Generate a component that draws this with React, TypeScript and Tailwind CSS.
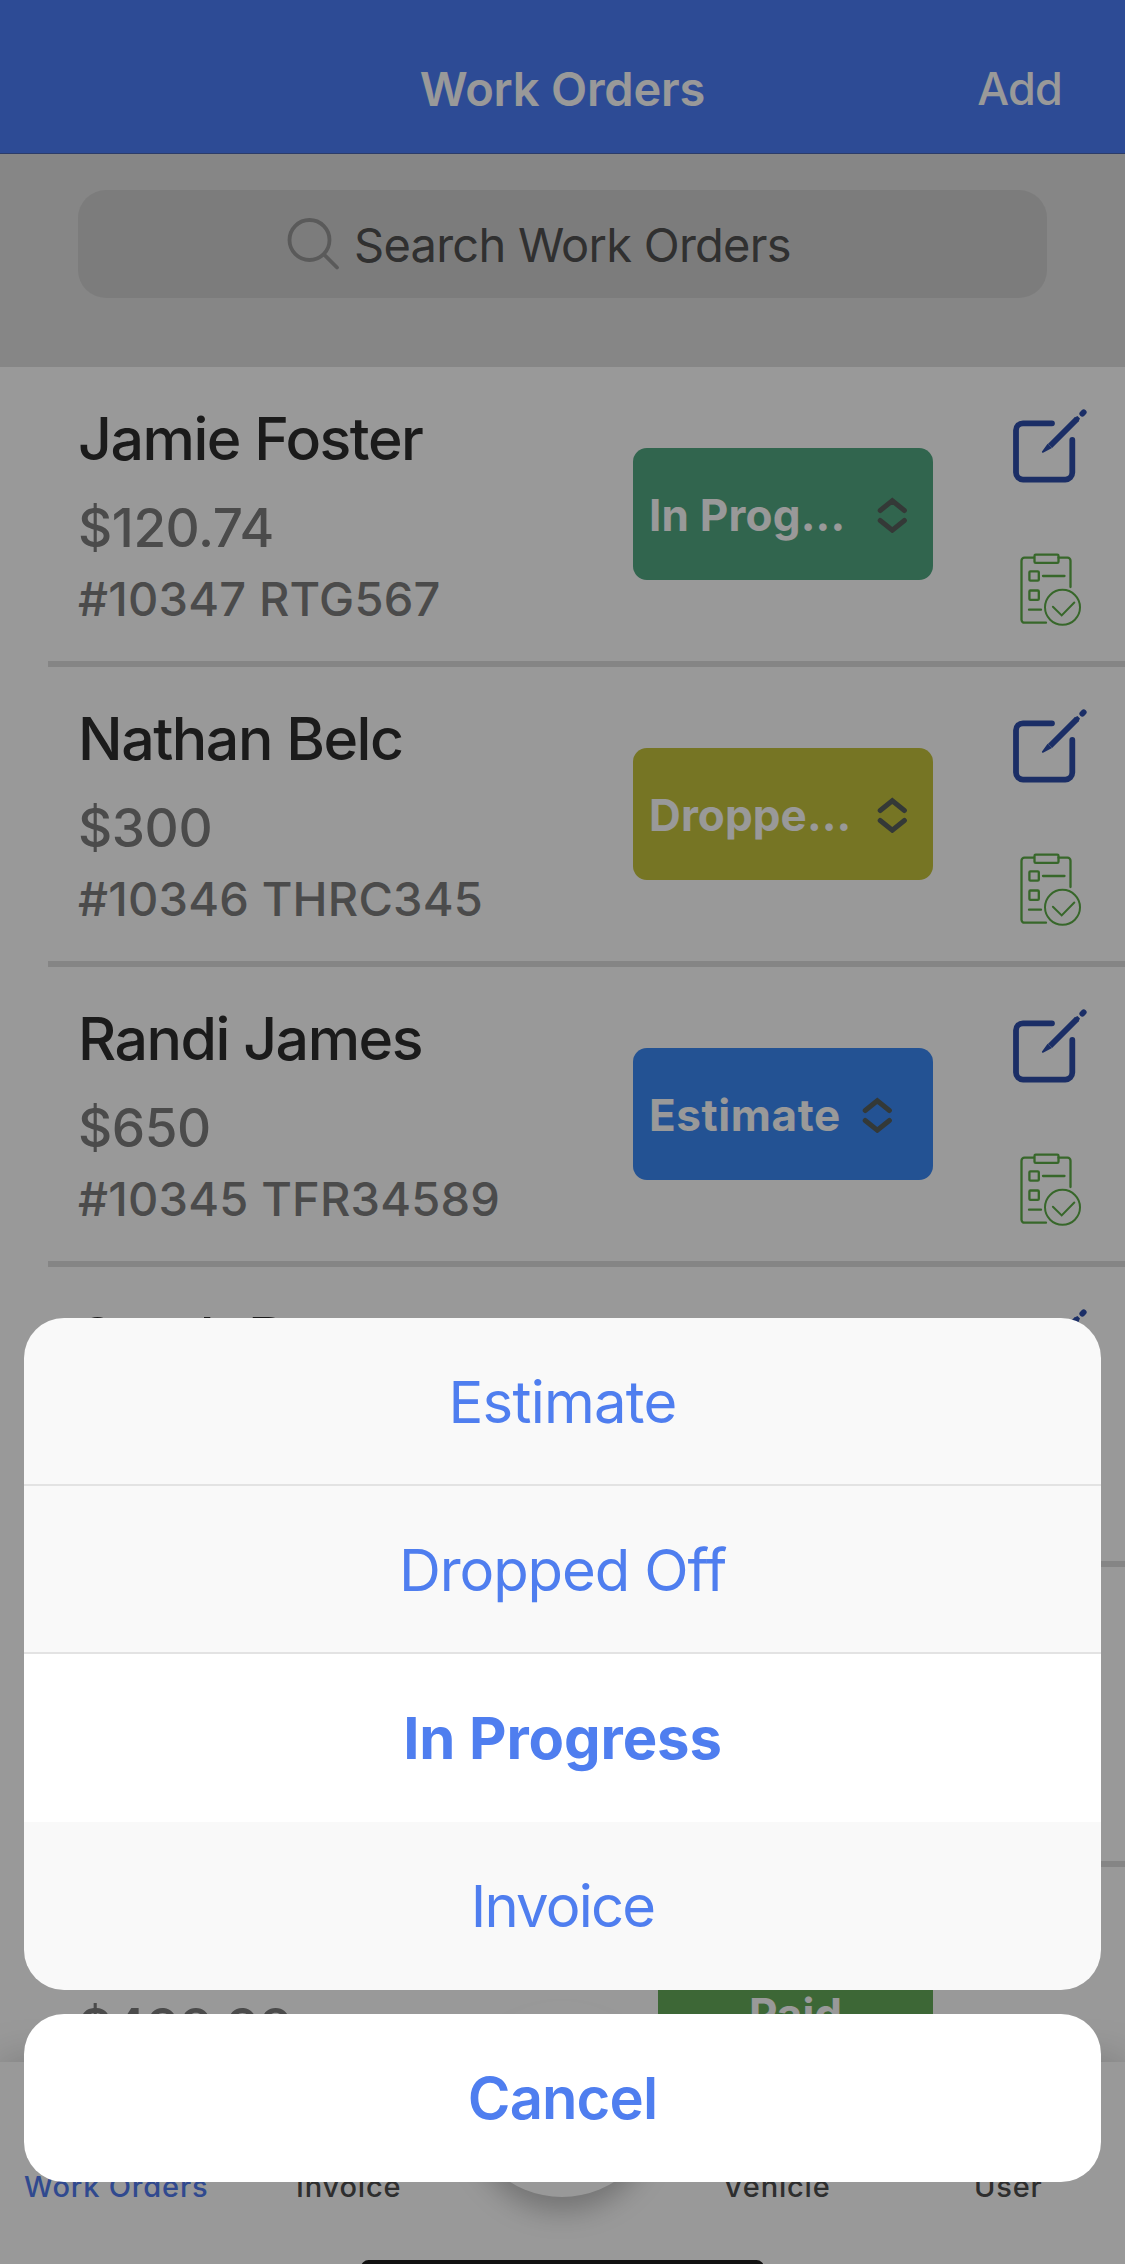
type Order = {
  name?: string;
  amount?: string;
  detail?: string;
  status?: "progress" | "dropped" | "estimate" | "paid";
};

const orders: Order[] = [
  { name: "Jamie Foster", amount: "$120.74", detail: "#10347 RTG567", status: "progress" },
  { name: "Nathan Belc", amount: "$300", detail: "#10346 THRC345", status: "dropped" },
  { name: "Randi James", amount: "$650", detail: "#10345 TFR34589", status: "estimate" },
  { name: "Sarah B" },
  {},
  { amount: "$498.98", status: "paid" },
];

const statuses = {
  progress: { label: "In Prog...", color: "bg-[#52a882]", text: "w-[227px] tracking-[0.2px]" },
  dropped: { label: "Droppe...", color: "bg-[#c5c33c]", text: "w-[227px] tracking-[0.1px]" },
  estimate: { label: "Estimate", color: "bg-[#3b89f5]", text: "w-[212px] tracking-[0.6px]" },
};

function EditIcon() {
  return (
    <svg width="80" height="80" viewBox="0 0 80 80" fill="none" stroke="#2d4eaa" strokeWidth="5.8" strokeLinecap="round">
      <path d="M45 16.3H16a7 7 0 0 0-7 7v42.3a7 7 0 0 0 7 7h42.3a7 7 0 0 0 7-7V33" />
      <path d="M70 12 43 39" strokeLinecap="butt" strokeWidth="6" />
      <path d="M67.5 10.5 70.5 9 73 11.5 71.5 14.5Z" fill="#2d4eaa" stroke="none" />
      <path d="M40.6 36.8 35 44.6a.8.8 0 0 0 1.1 1.1L45 41Z" fill="#2d4eaa" stroke="none" />
      <path d="M75.3 6.7 76.7 5.3" />
    </svg>
  );
}

function ChecklistIcon() {
  return (
    <svg width="68" height="78" viewBox="0 0 68 78" fill="none" stroke="#5dac46" strokeWidth="2.3" strokeLinecap="round">
      <path d="M18.5 7.7H9.5a3 3 0 0 0-3 3v59a3 3 0 0 0 3 3H31M43.5 7.7h9a3 3 0 0 1 3 3V37" />
      <rect x="19.5" y="4.7" width="24" height="8.2" rx="1.2" />
      <rect x="14.4" y="21.3" width="9.4" height="9.4" rx="1" />
      <rect x="14.4" y="40.5" width="9.4" height="9.4" rx="1" />
      <path d="M28 26h21.5M14 59.7h12" />
      <circle cx="47.5" cy="57.3" r="17.5" strokeWidth="2" />
      <path d="m37.9 56.7 8.8 8.7L59.3 52.5" strokeWidth="2" />
    </svg>
  );
}

function Chevrons() {
  return (
    <svg width="32" height="38" viewBox="0 0 32 38" fill="none" stroke="#585f5c" strokeWidth="5" strokeLinecap="round" strokeLinejoin="miter">
      <path d="M4.2 15.5 16.3 5.8l12.1 9.7M4.2 25.5 16.3 35.2l12.1-9.7" />
    </svg>
  );
}

function StatusButton({ status }: { status: Order["status"] }) {
  if (!status) return null;
  if (status === "paid") {
    return (
      <div className="mt-[81px] flex h-[132px] w-[275px] items-center justify-center bg-[#66ac5a] text-[44px] font-bold text-white">
        Paid
      </div>
    );
  }
  const s = statuses[status];
  return (
    <div className={`mt-[81px] flex h-[132px] w-[300px] items-center rounded-[14px] pl-[16px] ${s.color}`}>
      <span className={`whitespace-nowrap pt-[2px] text-[44px] font-bold text-white ${s.text}`}>{s.label}</span>
      <Chevrons />
    </div>
  );
}

function OrderRow({ order }: { order: Order }) {
  return (
    <div className="flex h-[300px] shrink-0 flex-col">
      <div className="flex h-[294px] items-start pl-[78px] pr-[32px]">
        <div className="flex flex-1 flex-col whitespace-nowrap pt-[32px] text-[#7d7d7d]">
          <div className="h-[80px] text-[59px] font-medium leading-[80px] tracking-[-0.025em] text-[#2e2e2e]">{order.name}</div>
          <div className="mt-[14px] h-[70px] text-[53px] font-medium leading-[70px] tracking-[-0.008em]">{order.amount}</div>
          <div className="h-[72px] text-[47px] font-medium leading-[72px] tracking-[0.2px]">{order.detail}</div>
        </div>
        <StatusButton status={order.status} />
        <div className="ml-[74px] flex w-[86px] flex-col pt-[40px]">
          {order.status !== "paid" && (
            <>
              <EditIcon />
              <div className="ml-[8px] mt-[63px]">
                <ChecklistIcon />
              </div>
            </>
          )}
        </div>
      </div>
      <div className="ml-[48px] h-[6px] bg-[#dedede]" />
    </div>
  );
}

export default function App() {
  return (
    <div className="relative flex h-[2264px] w-[1125px] flex-col overflow-hidden bg-white font-['Inter',sans-serif]">
      <header className="grid h-[154px] shrink-0 grid-cols-[1fr_auto_1fr] items-end border-b border-[#4a65ad] bg-[#4b7df8] text-white">
        <span />
        <h1 className="mb-[34px] text-[47px] font-semibold leading-[60px] tracking-[-0.2px]">Work Orders</h1>
        <span className="mb-[34px] mr-[63px] text-right text-[45px] font-medium leading-[60px] tracking-[-0.8px]">Add</span>
      </header>

      <div className="h-[213px] shrink-0 bg-[#dfdfdf] px-[78px] pt-[36px]">
        <div className="flex h-[108px] items-center rounded-[28px] bg-[#cfcfcf] pl-[207px]">
          <svg width="56" height="56" viewBox="0 0 56 56" fill="none" stroke="#969696" strokeWidth="3.8" strokeLinecap="round">
            <circle cx="24.5" cy="24" r="20" />
            <path d="M39 38.5 52 51.5" />
          </svg>
          <span className="ml-[13px] whitespace-nowrap pt-[2px] text-[47px] tracking-[-0.75px] text-[#505050]">Search Work Orders</span>
        </div>
      </div>

      <main className="flex min-h-0 flex-1 flex-col overflow-hidden">
        {orders.map((order, i) => (
          <OrderRow key={i} order={order} />
        ))}
      </main>

      {/* tab bar */}
      <nav className="relative h-[202px] shrink-0 bg-white pt-[107px] shadow-[0_0_40px_rgba(0,0,0,0.22)]">
        <div className="absolute left-[464px] top-[-61px] h-[196px] w-[196px] rounded-full bg-white shadow-[0_20px_28px_-6px_rgba(0,0,0,0.25)]" />
        <div className="flex whitespace-nowrap text-[29px] font-medium leading-[36px] tracking-[0.028em] text-[#4d4d4d]">
          <span className="ml-[24px] w-[272px] text-[#507aee]">Work Orders</span>
          <span className="w-[427px]">Invoice</span>
          <span className="w-[251px]">Vehicle</span>
          <span>User</span>
        </div>
      </nav>

      {/* action sheet */}
      <div className="absolute inset-0 flex flex-col justify-end bg-black/40 px-[24px] pb-[82px] text-center text-[58px] leading-[168px] text-[#4f7eef]">
        <div className="overflow-hidden rounded-[40px] bg-[#f9f9f9]">
          <div className="h-[168px] border-b-2 border-[#e3e3e3] tracking-[-0.75px]">Estimate</div>
          <div className="h-[168px] border-b-2 border-[#e3e3e3] tracking-[-1.1px]">Dropped Off</div>
          <div className="h-[168px] bg-white font-bold tracking-[-0.1px]">In Progress</div>
          <div className="h-[168px] tracking-[-1.8px]">Invoice</div>
        </div>
        <div className="mt-[24px] h-[168px] rounded-[40px] bg-white font-semibold tracking-[-0.9px]">Cancel</div>
      </div>

      {/* home indicator */}
      <div className="absolute left-[361px] top-[2260px] h-[15px] w-[403px] rounded-full bg-[#111]" />
    </div>
  );
}
